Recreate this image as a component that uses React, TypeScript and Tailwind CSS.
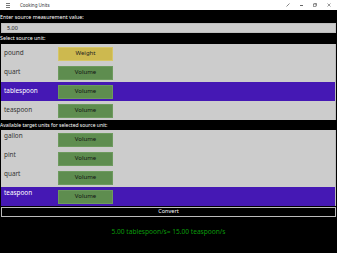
import React from "react";

const font = { fontFamily: '"Noto Sans", "Open Sans", sans-serif' };

function Btn({ label, kind }: { label: string; kind: "w" | "v" }) {
  return (
    <div
      className={
        "absolute left-[57px] w-[55px] h-[14px] flex items-center justify-center text-[6px] border " +
        (kind === "w"
          ? "bg-[#cdb94f] border-[#d6c666] text-[#222]"
          : "bg-[#5e8d4f] border-[#6d9a5e] text-[#111]")
      }
    >
      {label}
    </div>
  );
}

function Row({
  name,
  btn,
  kind,
  selected,
  top,
}: {
  name: string;
  btn: string;
  kind: "w" | "v";
  selected?: boolean;
  top?: boolean;
}) {
  return (
    <div
      className={
        "relative h-[19px] flex " +
        (top ? "items-start pt-[3px] " : "items-center ") +
        (selected ? "bg-[#4518b4] text-white" : "text-[#333333]")
      }
    >
      <span className="pl-[3px] text-[6.4px] leading-none">{name}</span>
      <div className="absolute inset-0 flex items-center">
        <Btn label={btn} kind={kind} />
      </div>
    </div>
  );
}

export default function App() {
  return (
    <div className="w-[337px] h-[253px] bg-black flex flex-col overflow-hidden antialiased" style={font}>
      <div className="h-[10px] bg-white flex items-center relative shrink-0">
        <div className="ml-[6px] w-[4px] flex flex-col gap-[1px]">
          <div className="h-px bg-[#777]" />
          <div className="h-px bg-[#777]" />
          <div className="h-px bg-[#777]" />
        </div>
        <span className="ml-[10px] text-[4.5px] text-[#333] leading-none">Cooking Units</span>
        <div className="ml-auto flex items-center gap-[10px] mr-[6px] text-[#666]">
          <svg width="4" height="4" viewBox="0 0 4 4">
            <path d="M0.5 3.5 L3.5 0.5" stroke="#555" strokeWidth="0.7" />
          </svg>
          <div className="w-[3px] h-px bg-[#666]" />
          <svg width="4" height="4" viewBox="0 0 4 4">
            <rect x="0.5" y="1" width="2.5" height="2.5" fill="none" stroke="#555" strokeWidth="0.6" />
            <path d="M1.2 0.5 H3.5 V2.8" fill="none" stroke="#555" strokeWidth="0.6" />
          </svg>
          <svg width="4" height="4" viewBox="0 0 4 4">
            <path d="M0.5 0.5 L3.5 3.5 M3.5 0.5 L0.5 3.5" stroke="#555" strokeWidth="0.6" />
          </svg>
        </div>
      </div>
      <div className="h-[13px] flex items-center pt-[3px] text-white text-[5.3px] leading-none shrink-0">
        Enter source measurement value:
      </div>
      <div className="mx-[1px] h-[10px] bg-[#cccccc] border border-[#bdbdbd] flex items-center pl-[5px] text-[5.5px] text-[#222] shrink-0">
        5.00
      </div>
      <div className="h-[11px] flex items-center text-white text-[5.3px] leading-none shrink-0">
        Select source unit:
      </div>
      <div className="ml-[1px] mr-[1px] bg-[#cccccc] border-r border-[#bbbbbb] flex flex-col shrink-0">
        <Row name="pound" btn="Weight" kind="w" />
        <Row name="quart" btn="Volume" kind="v" />
        <Row name="tablespoon" btn="Volume" kind="v" selected />
        <Row name="teaspoon" btn="Volume" kind="v" />
      </div>
      <div className="h-[10px] flex items-center text-white text-[5px] leading-none shrink-0">
        Available target units for selected source unit:
      </div>
      <div className="ml-[1px] mr-[1px] bg-[#cccccc] border-r border-[#bbbbbb] flex flex-col shrink-0">
        <Row name="gallon" btn="Volume" kind="v" top />
        <Row name="pint" btn="Volume" kind="v" top />
        <Row name="quart" btn="Volume" kind="v" top />
        <Row name="teaspoon" btn="Volume" kind="v" selected top />
      </div>
      <div className="mx-[1px] mt-[1px] h-[10px] border border-[#bbbbbb] flex items-center justify-center text-white text-[5.5px] leading-none shrink-0">
        Convert
      </div>
      <div className="flex-1 flex items-center justify-center text-[#0a9a0a] text-[6.6px] leading-none pb-[6px]">
        5.00 tablespoon/s= 15.00 teaspoon/s
      </div>
    </div>
  );
}
